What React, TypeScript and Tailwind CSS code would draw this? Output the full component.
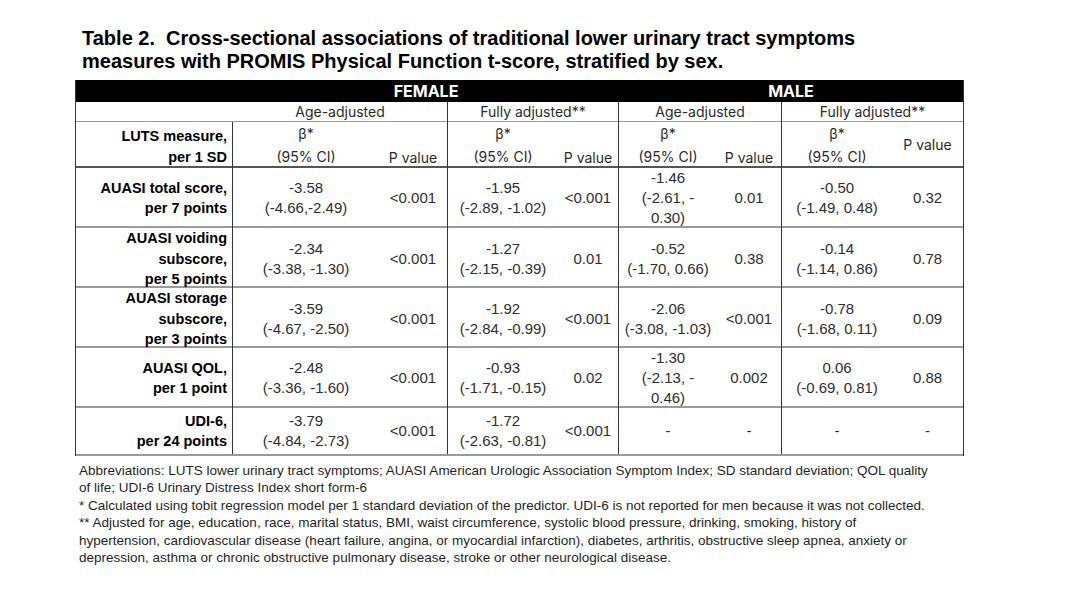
import React from "react";

const GRID =
  "grid grid-cols-[157px_146px_69px_110px_61px_98px_65px_110px_71px]";

type Cell = { b: string[]; p: string };
type Row = { label: string[]; cells: Cell[]; h: string };

const rows: Row[] = [
  {
    label: ["AUASI total score,", "per 7 points"],
    h: "h-[60px]",
    cells: [
      { b: ["-3.58", "(-4.66,-2.49)"], p: "<0.001" },
      { b: ["-1.95", "(-2.89, -1.02)"], p: "<0.001" },
      { b: ["-1.46", "(-2.61, -", "0.30)"], p: "0.01" },
      { b: ["-0.50", "(-1.49, 0.48)"], p: "0.32" },
    ],
  },
  {
    label: ["AUASI voiding", "subscore,", "per 5 points"],
    h: "h-[60px]",
    cells: [
      { b: ["-2.34", "(-3.38, -1.30)"], p: "<0.001" },
      { b: ["-1.27", "(-2.15, -0.39)"], p: "0.01" },
      { b: ["-0.52", "(-1.70, 0.66)"], p: "0.38" },
      { b: ["-0.14", "(-1.14, 0.86)"], p: "0.78" },
    ],
  },
  {
    label: ["AUASI storage", "subscore,", "per 3 points"],
    h: "h-[60px]",
    cells: [
      { b: ["-3.59", "(-4.67, -2.50)"], p: "<0.001" },
      { b: ["-1.92", "(-2.84, -0.99)"], p: "<0.001" },
      { b: ["-2.06", "(-3.08, -1.03)"], p: "<0.001" },
      { b: ["-0.78", "(-1.68, 0.11)"], p: "0.09" },
    ],
  },
  {
    label: ["AUASI QOL,", "per 1 point"],
    h: "h-[60px]",
    cells: [
      { b: ["-2.48", "(-3.36, -1.60)"], p: "<0.001" },
      { b: ["-0.93", "(-1.71, -0.15)"], p: "0.02" },
      { b: ["-1.30", "(-2.13, -", "0.46)"], p: "0.002" },
      { b: ["0.06", "(-0.69, 0.81)"], p: "0.88" },
    ],
  },
  {
    label: ["UDI-6,", "per 24 points"],
    h: "h-[48px]",
    cells: [
      { b: ["-3.79", "(-4.84, -2.73)"], p: "<0.001" },
      { b: ["-1.72", "(-2.63, -0.81)"], p: "<0.001" },
      { b: ["-"], p: "-" },
      { b: ["-"], p: "-" },
    ],
  },
];

const hdr = "font-['Inter',sans-serif] text-[14px] text-[#2a2a2a]";
const data =
  "font-['Liberation_Sans',Arial,sans-serif] text-[15px] leading-[20px] text-[#2e2e2e]";

function BetaHead() {
  return (
    <div className={`${hdr} flex flex-col items-center leading-[23px]`}>
      <span>β*</span>
      <span>(95% CI)</span>
    </div>
  );
}

export default function App() {
  return (
    <div className="w-[1080px] h-[607px] bg-white overflow-hidden pt-[27px]">
      <div className="ml-[82px] font-['Liberation_Sans',Arial,sans-serif] font-bold text-[20px] leading-[23px] text-black whitespace-pre">
        <div>Table 2.  Cross-sectional associations of traditional lower urinary tract symptoms</div>
        <div>measures with PROMIS Physical Function t-score, stratified by sex.</div>
      </div>

      <div className="ml-[75px] mt-[7px] w-[889px] border-l border-r border-[#333]">
        {/* black bar */}
        <div className={`${GRID} h-[22px] bg-black text-white font-['Inter',sans-serif] font-bold text-[16px] leading-[22px]`}>
          <div />
          <div className="col-span-4 text-center">FEMALE</div>
          <div className="col-span-4 text-center">MALE</div>
        </div>
        {/* row 1 */}
        <div className={`${GRID} h-[20px] border-b border-[#9a9a9a] ${hdr} leading-[20px]`}>
          <div />
          <div className="col-span-2 text-center border-r border-[#333]">Age-adjusted</div>
          <div className="col-span-2 text-center border-r border-[#333]">Fully adjusted**</div>
          <div className="col-span-2 text-center border-r border-[#333]">Age-adjusted</div>
          <div className="col-span-2 text-center">Fully adjusted**</div>
        </div>
        {/* row 2 */}
        <div className={`${GRID} h-[46px] border-b-2 border-[#555]`}>
          <div className="border-r border-[#333] pr-[5px] pt-[4px] text-right font-['Liberation_Sans',Arial,sans-serif] font-bold text-[14.5px] leading-[21px] text-black">
            <div>LUTS measure,</div>
            <div>per 1 SD</div>
          </div>
          <BetaHead />
          <div className={`${hdr} border-r border-[#333] flex items-end justify-center leading-[20px]`}>P value</div>
          <BetaHead />
          <div className={`${hdr} border-r border-[#333] flex items-end justify-center leading-[20px]`}>P value</div>
          <BetaHead />
          <div className={`${hdr} border-r border-[#333] flex items-end justify-center leading-[20px]`}>P value</div>
          <BetaHead />
          <div className={`${hdr} flex items-center justify-center leading-[20px]`}>P value</div>
        </div>
        {/* data rows */}
        {rows.map((r, i) => (
          <div key={i} className={`${GRID} ${r.h} border-b-2 border-[#9a9a9a]`}>
            <div className="border-r border-[#333] pr-[5px] flex flex-col justify-center items-end font-['Liberation_Sans',Arial,sans-serif] font-bold text-[14.5px] leading-[20.5px] text-black">
              {r.label.map((l, j) => (
                <div key={j}>{l}</div>
              ))}
            </div>
            {r.cells.map((c, k) => (
              <React.Fragment key={k}>
                <div className={`${data} flex flex-col justify-center items-center`}>
                  {c.b.map((t, j) => (
                    <div key={j}>{t}</div>
                  ))}
                </div>
                <div
                  className={`${data} flex items-center justify-center ${k < 3 ? "border-r border-[#333]" : ""}`}
                >
                  {c.p}
                </div>
              </React.Fragment>
            ))}
          </div>
        ))}
      </div>

      <div className="ml-[79px] mt-[6px] font-['Liberation_Sans',Arial,sans-serif] text-[13.5px] leading-[17.4px] text-[#1f1f1f] whitespace-nowrap">
        <div>Abbreviations: LUTS lower urinary tract symptoms; AUASI American Urologic Association Symptom Index; SD standard deviation; QOL quality</div>
        <div>of life; UDI-6 Urinary Distress Index short form-6</div>
        <div>* Calculated using tobit regression model per 1 standard deviation of the predictor. UDI-6 is not reported for men because it was not collected.</div>
        <div>** Adjusted for age, education, race, marital status, BMI, waist circumference, systolic blood pressure, drinking, smoking, history of</div>
        <div>hypertension, cardiovascular disease (heart failure, angina, or myocardial infarction), diabetes, arthritis, obstructive sleep apnea, anxiety or</div>
        <div>depression, asthma or chronic obstructive pulmonary disease, stroke or other neurological disease.</div>
      </div>
    </div>
  );
}
